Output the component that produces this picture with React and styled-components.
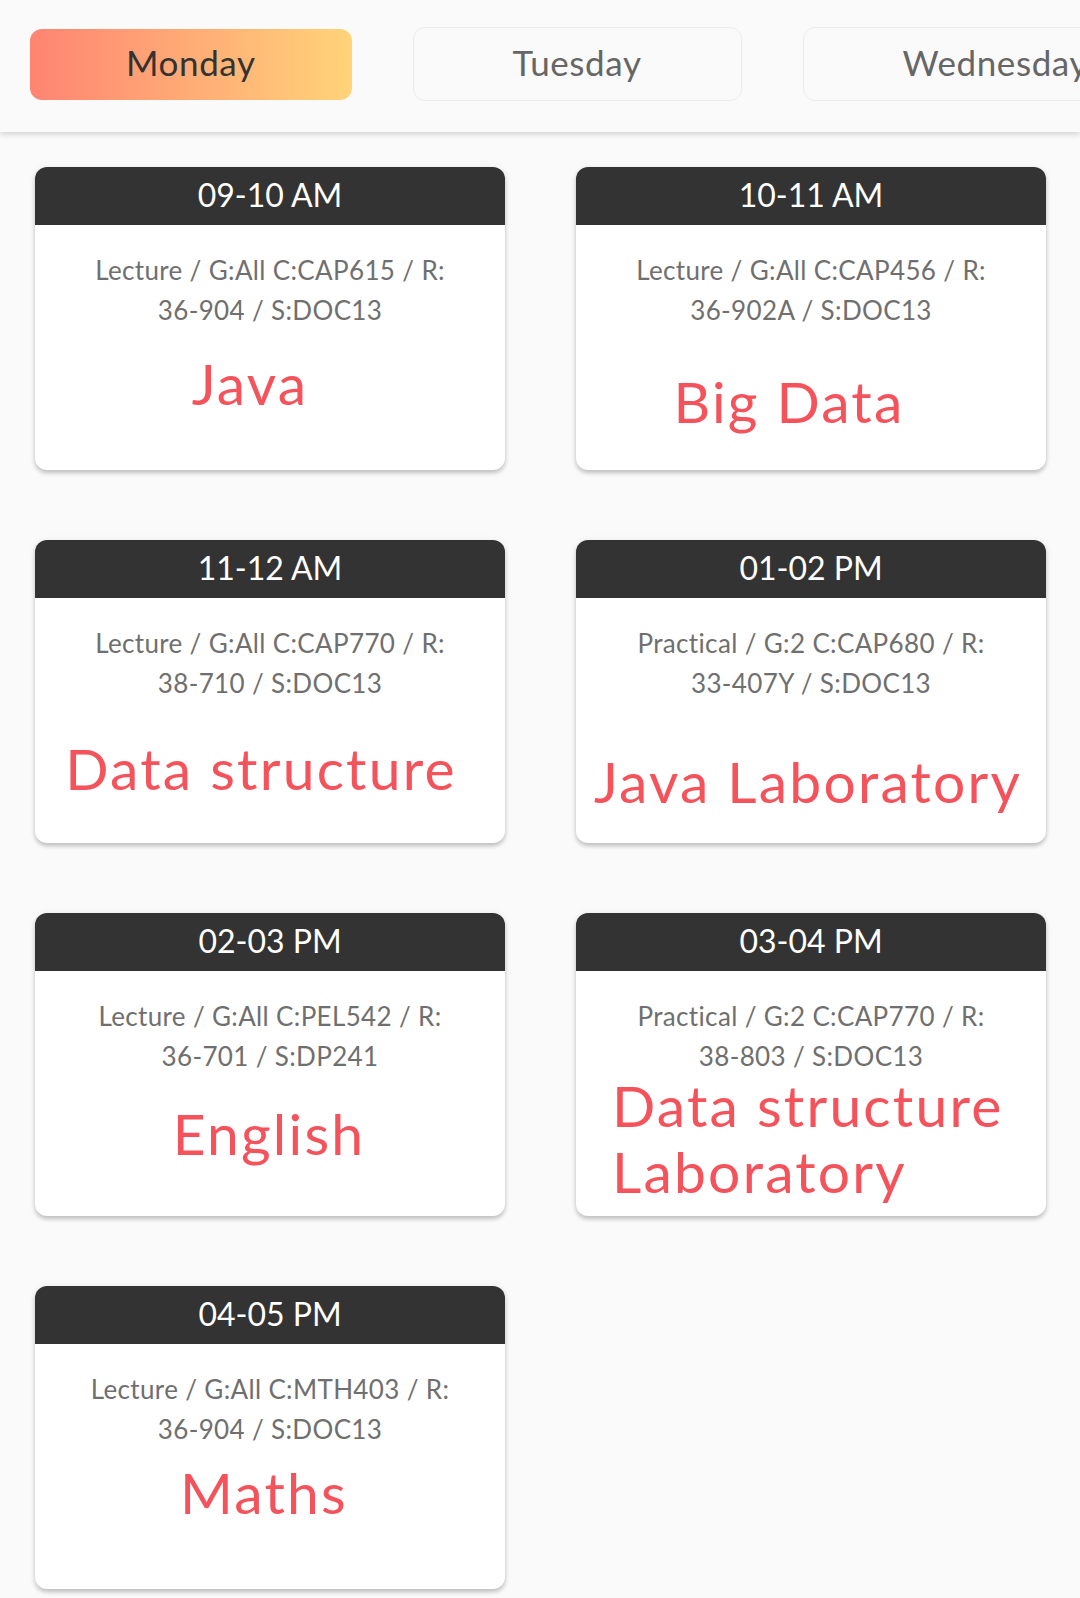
import React from 'react';
import styled, { createGlobalStyle } from 'styled-components';

const GlobalStyle = createGlobalStyle`
  * { box-sizing: border-box; }
  body {
    margin: 0;
    background: #fafafa;
    font-family: Lato, 'Noto Sans', sans-serif;
    overflow-x: hidden;
  }
`;

const days = ['Monday', 'Tuesday', 'Wednesday', 'Thursday', 'Friday', 'Saturday'];

const classes = [
  { time: '09-10 AM', info: ['Lecture / G:All C:CAP615 / R:', '36-904 / S:DOC13'], title: 'Java', top: 20, shift: 20 },
  { time: '10-11 AM', info: ['Lecture / G:All C:CAP456 / R:', '36-902A / S:DOC13'], title: 'Big Data', top: 38, shift: 22 },
  { time: '11-12 AM', info: ['Lecture / G:All C:CAP770 / R:', '38-710 / S:DOC13'], title: 'Data structure', top: 32, shift: 9 },
  { time: '01-02 PM', info: ['Practical / G:2 C:CAP680 / R:', '33-407Y / S:DOC13'], title: 'Java Laboratory', top: 45, shift: 3 },
  { time: '02-03 PM', info: ['Lecture / G:All C:PEL542 / R:', '36-701 / S:DP241'], title: 'English', top: 24, shift: 1 },
  { time: '03-04 PM', info: ['Practical / G:2 C:CAP770 / R:', '38-803 / S:DOC13'], title: 'Data structure Laboratory', top: -4, shift: 0, left: true },
  { time: '04-05 PM', info: ['Lecture / G:All C:MTH403 / R:', '36-904 / S:DOC13'], title: 'Maths', top: 10, shift: 6 },
];

const App = () => {
  return (
    <>
      <GlobalStyle />
      <DayBar>
        {days.map((d, i) => (
          <DayButton key={d} $active={i === 0}>
            {d}
          </DayButton>
        ))}
      </DayBar>
      <Grid>
        {classes.map((c) => (
          <Card key={c.time}>
            <Time>{c.time}</Time>
            <Body>
              <Info>
                <span>{c.info[0]}</span>
                <span>{c.info[1]}</span>
              </Info>
              <Title $top={c.top} $shift={c.shift} $left={c.left}>
                {c.title}
              </Title>
            </Body>
          </Card>
        ))}
      </Grid>
    </>
  );
};

const DayBar = styled.nav`
  display: flex;
  align-items: center;
  gap: 61px;
  height: 132px;
  padding: 0 0 4px 30px;
  background: #fafafa;
  box-shadow: 0 2px 6px rgba(0, 0, 0, 0.18);
  overflow: hidden;
  white-space: nowrap;
`;

const DayButton = styled.div`
  flex: none;
  display: flex;
  align-items: center;
  justify-content: center;
  height: ${(p) => (p.$active ? '71px' : '74px')};
  padding: 0 ${(p) => (p.$active ? '96px' : '99px')} 4px;
  border-radius: 12px;
  font-size: 35px;
  letter-spacing: 0.6px;
  color: ${(p) => (p.$active ? '#333' : '#666')};
  background: ${(p) =>
    p.$active ? 'linear-gradient(to right, #ff8472, #ffd479)' : '#fafafa'};
  border: ${(p) => (p.$active ? 'none' : '1px solid #ececec')};
`;

const Grid = styled.main`
  display: grid;
  grid-template-columns: 470px 470px;
  column-gap: 71px;
  row-gap: 70px;
  padding: 35px 34px 40px 35px;
`;

const Card = styled.article`
  height: 303px;
  background: #fff;
  border-radius: 12px;
  overflow: hidden;
  box-shadow: 0 3px 4px rgba(0, 0, 0, 0.22), 0 0 8px rgba(0, 0, 0, 0.05);
`;

const Time = styled.h3`
  margin: 0;
  height: 58px;
  line-height: 56px;
  background: #333;
  color: #fff;
  text-align: center;
  font-size: 32px;
  font-weight: 400;
`;

const Body = styled.div`
  padding-top: 25px;
`;

const Info = styled.p`
  margin: 0;
  display: flex;
  flex-direction: column;
  align-items: center;
  font-size: 26px;
  line-height: 40px;
  letter-spacing: 0.35px;
  color: #6f6f6f;
`;

const Title = styled.h2`
  margin: ${(p) => p.$top}px 0 0;
  padding: ${(p) => (p.$left ? '0 30px 0 36px' : `0 ${p.$shift * 2}px 0 0`)};
  text-align: ${(p) => (p.$left ? 'left' : 'center')};
  font-size: 57px;
  line-height: 66px;
  font-weight: 400;
  letter-spacing: 2.2px;
  color: #f5535c;
`;

export default App;
